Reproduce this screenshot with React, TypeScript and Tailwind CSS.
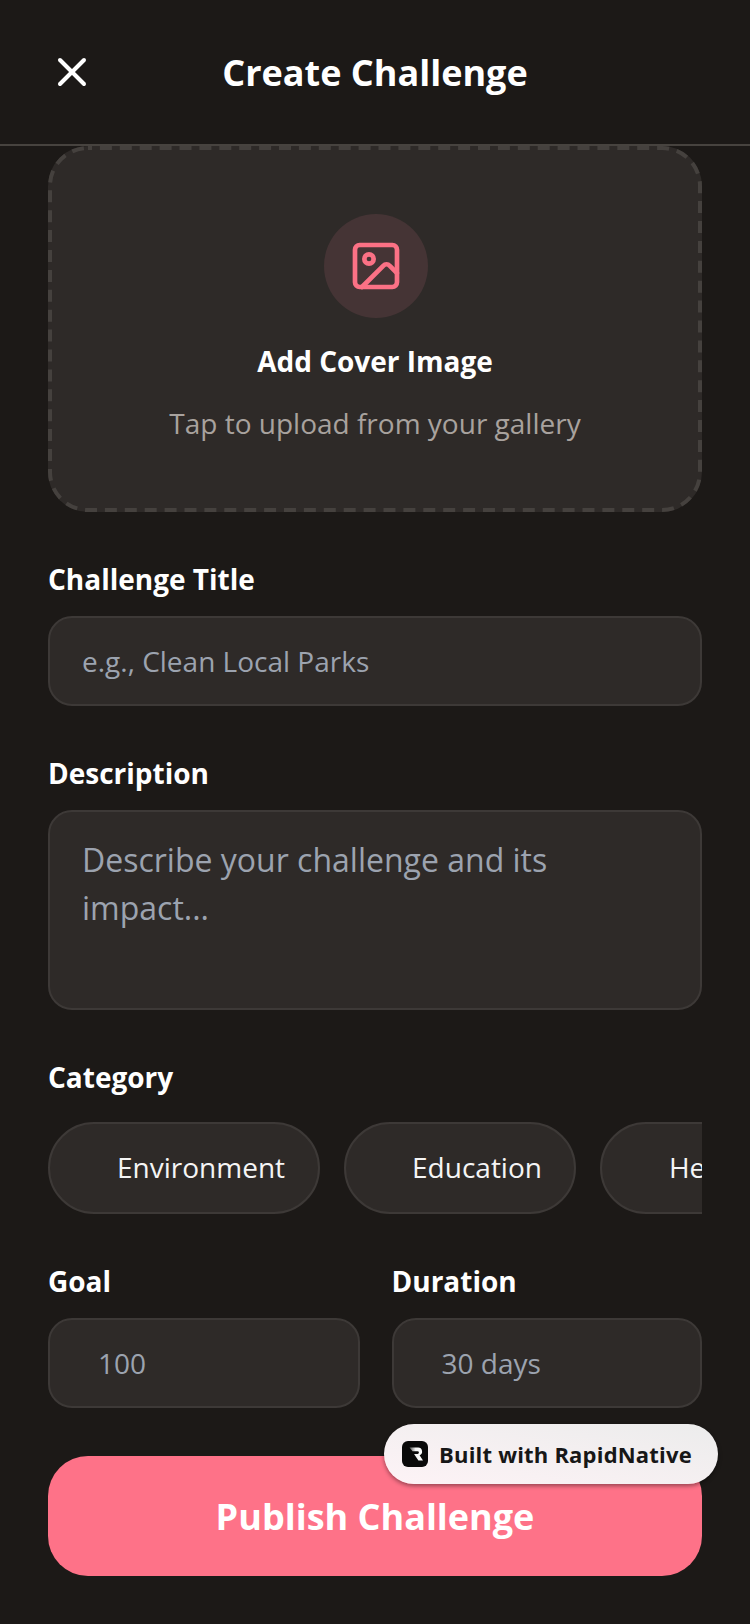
import React from "react";
import { X, Image as ImageIcon } from "lucide-react";

function Label({ children }: { children: React.ReactNode }) {
  return <div className="text-[28px] leading-[36px] font-bold text-white">{children}</div>;
}

function Chip({ children, className }: { children: React.ReactNode; className: string }) {
  return (
    <div className={`shrink-0 h-[92px] rounded-[46px] bg-[#2e2a28] border-2 border-[#3d3937] flex items-center pb-[2px] text-[28px] text-[#f5f5f5] ${className}`}>
      {children}
    </div>
  );
}

export default function App() {
  return (
    <div className="relative w-[750px] h-[1624px] overflow-hidden bg-[#1c1917] font-['Open_Sans',sans-serif]">
      <header className="h-[146px] border-b-2 border-[#47433f] flex items-center relative">
        <X className="ml-[48px] mt-[-1px] text-white" size={48} strokeWidth={2} />
        <h1 className="absolute left-0 right-0 top-[48px] text-center text-[36px] leading-[50px] font-bold text-white">Create Challenge</h1>
      </header>

      <main className="px-[48px] flex flex-col">
        <div className="relative h-[366px] rounded-[40px] bg-[#2e2a28] flex flex-col items-center pt-[68px]">
          <svg width="654" height="366" className="absolute left-0 top-0" fill="none">
            <rect x="2" y="2" width="650" height="362" rx="38" stroke="#45413e" strokeWidth="4" strokeDasharray="12 7.9" strokeDashoffset="8" />
          </svg>
          <div className="ml-[2px] w-[104px] h-[104px] rounded-full bg-[#453435] flex items-center justify-center">
            <ImageIcon className="text-[#fb7185]" size={56} strokeWidth={2} />
          </div>
          <div className="mt-[25px] text-[28px] leading-[36px] font-bold text-white">Add Cover Image</div>
          <div className="mt-[26px] text-[28px] leading-[36px] text-[#a8a29e]">Tap to upload from your gallery</div>
        </div>

        <div className="mt-[49px]"><Label>Challenge Title</Label></div>
        <input
          readOnly
          placeholder="e.g., Clean Local Parks"
          className="mt-[19px] h-[90px] rounded-[24px] bg-[#2e2a28] border-2 border-[#3d3937] pl-[32px] text-[28px] text-white outline-none placeholder:text-[#9ca3af]"
        />

        <div className="mt-[49px]"><Label>Description</Label></div>
        <textarea
          readOnly
          placeholder="Describe your challenge and its impact..."
          className="mt-[19px] h-[200px] resize-none rounded-[24px] bg-[#2e2a28] border-2 border-[#3d3937] pl-[32px] pr-[32px] pt-[24px] text-[32px] leading-[48px] text-white outline-none placeholder:text-[#9ca3af]"
        />

        <div className="mt-[49px]"><Label>Category</Label></div>
        <div className="mt-[27px] flex gap-[24px] overflow-hidden">
          <Chip className="pl-[67px] pr-[33px]">Environment</Chip>
          <Chip className="pl-[66px] pr-[32px]">Education</Chip>
          <Chip className="pl-[67px] pr-[32px]">Health</Chip>
        </div>

        <div className="mt-[49px] flex gap-[31.5px]">
          <div className="w-[312px] flex flex-col">
            <Label>Goal</Label>
            <input
              readOnly
              placeholder="100"
              className="mt-[19px] w-full h-[90px] rounded-[24px] bg-[#2e2a28] border-2 border-[#3d3937] pl-[48px] text-[28px] text-white outline-none placeholder:text-[#9ca3af]"
            />
          </div>
          <div className="flex-1 flex flex-col">
            <Label>Duration</Label>
            <input
              readOnly
              placeholder="30 days"
              className="mt-[19px] w-full h-[90px] rounded-[24px] bg-[#2e2a28] border-2 border-[#3d3937] pl-[48px] text-[28px] text-white outline-none placeholder:text-[#9ca3af]"
            />
          </div>
        </div>

        <button className="mt-[48px] h-[120px] pt-[2px] rounded-[40px] bg-[#fe7288] text-[36px] font-bold text-white">Publish Challenge</button>
      </main>

      <div className="absolute left-[384px] top-[1424px] w-[334px] h-[60px] rounded-[30px] bg-gradient-to-bl from-[#ececec] to-[#fdf3f6] shadow-[0_2px_4px_rgba(0,0,0,0.4)] flex items-center pl-[18px]">
        <svg width="26" height="26" viewBox="0 0 26 26" className="shrink-0">
          <defs>
            <linearGradient id="rn" x1="0" x2="1" y1="0" y2="0">
              <stop offset="0" stopColor="#555" />
              <stop offset="0.45" stopColor="#f5f5f5" />
              <stop offset="1" stopColor="#ffffff" />
            </linearGradient>
          </defs>
          <rect width="26" height="26" rx="6" fill="#0a0a0a" />
          <path d="M7.5 6.5h8.5a4 4 0 0 1 1.6 7.7L21 19.5h-4.6l-4.4-6.6h3.6a1.3 1.3 0 0 0 0-2.6H10.5L7.5 6.5z" fill="url(#rn)" />
        </svg>
        <span className="ml-[11px] text-[22px] font-bold text-[#171717] tracking-[0.2px]">Built with RapidNative</span>
      </div>
    </div>
  );
}
